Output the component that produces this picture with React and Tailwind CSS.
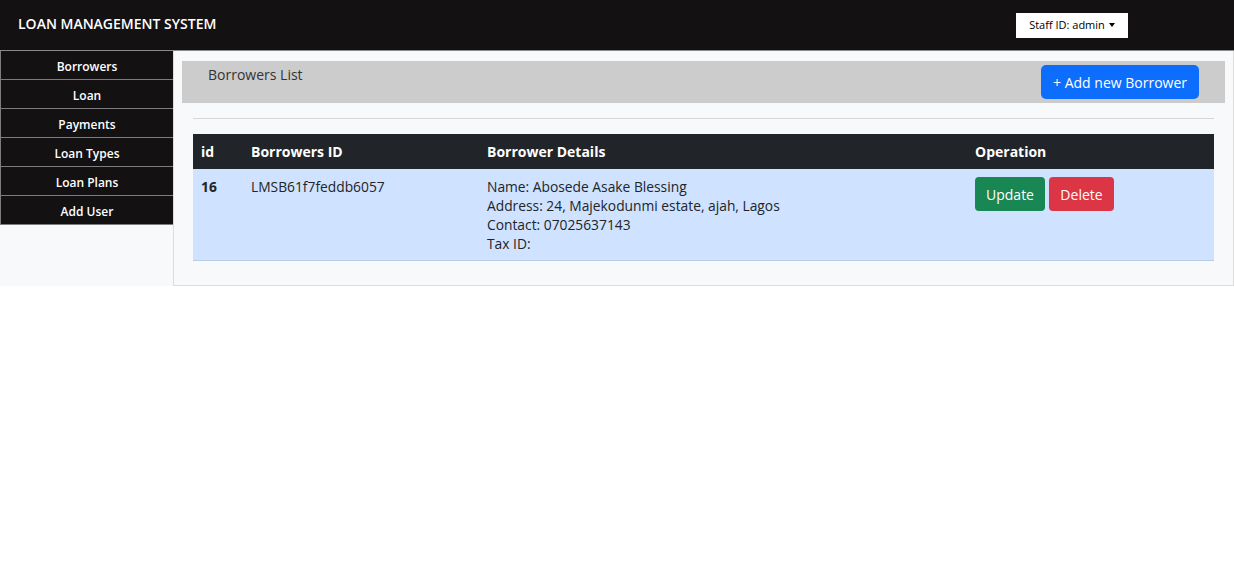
import React from "react";

const navItems = ["Borrowers", "Loan", "Payments", "Loan Types", "Loan Plans", "Add User"];

export default function App() {
  return (
    <div className="w-[1234px] h-[564px] bg-white font-['Open_Sans',sans-serif] text-[#212529]">
      <header className="h-[50px] bg-[#131112] flex items-center justify-between pl-[18px] pr-[106px]">
        <div className="text-white text-[14px] font-semibold pb-[4px]">LOAN MANAGEMENT SYSTEM</div>
        <button className="h-[25px] w-[112px] bg-white text-black text-[11px] flex items-center justify-center gap-[4px]">
          <span>Staff ID: admin</span>
          <span className="inline-block w-0 h-0 border-l-[3.5px] border-r-[3.5px] border-t-[4px] border-l-transparent border-r-transparent border-t-black"></span>
        </button>
      </header>
      <div className="flex border-t border-[#8a8a8a]">
        <aside className="w-[173px] bg-[#f8f9fa] shrink-0">
          {navItems.map((item) => (
            <div
              key={item}
              className="h-[29px] pt-[3px] bg-[#131112] border-b border-l border-[#7d7d7d] flex items-center justify-center text-white text-[12px] font-semibold"
            >
              {item}
            </div>
          ))}
        </aside>
        <main className="flex-1 bg-[#f8f9fa] border-l border-r border-b border-[#dcdcdc] pt-[10px] pb-[24px]">
          <div className="mx-[8px] h-[42px] bg-[#cccccc] flex items-start justify-between pl-[26px] pr-[26px]">
            <div className="pt-[3px] text-[14px] text-[#333]">Borrowers List</div>
            <button className="mt-[4px] h-[34px] px-[12px] bg-[#0d6efd] text-white text-[14px] rounded-[5px]">
              + Add new Borrower
            </button>
          </div>
          <div className="mx-[19px] mt-[15px] h-px bg-[#d6d7d8]"></div>
          <table className="mx-[19px] mt-[15px] w-[1021px] border-collapse table-fixed text-[13.8px]">
            <colgroup>
              <col className="w-[50px]" />
              <col className="w-[236px]" />
              <col className="w-[488px]" />
              <col className="w-[247px]" />
            </colgroup>
            <thead>
              <tr className="bg-[#212529] text-white h-[35px] text-[14px]">
                <th className="text-left font-bold px-[8px] align-middle">id</th>
                <th className="text-left font-bold px-[8px] align-middle">Borrowers ID</th>
                <th className="text-left font-bold px-[8px] align-middle">Borrower Details</th>
                <th className="text-left font-bold px-[8px] align-middle">Operation</th>
              </tr>
            </thead>
            <tbody>
              <tr className="bg-[#cfe2ff] border-b border-[#bacbe6] align-top">
                <td className="px-[8px] pt-[8px] font-bold leading-[19px]">16</td>
                <td className="px-[8px] pt-[8px] leading-[19px]">LMSB61f7feddb6057</td>
                <td className="px-[8px] pt-[8px] pb-[7px] leading-[19px]">
                  <div>Name: Abosede Asake Blessing</div>
                  <div>Address: 24, Majekodunmi estate, ajah, Lagos</div>
                  <div>Contact: 07025637143</div>
                  <div>Tax ID:</div>
                </td>
                <td className="px-[8px] pt-[8px]">
                  <div className="flex gap-[4px]">
                    <button className="h-[34px] w-[70px] bg-[#198754] text-white rounded-[4px] text-[14px]">Update</button>
                    <button className="h-[34px] w-[65px] bg-[#dc3545] text-white rounded-[4px] text-[14px]">Delete</button>
                  </div>
                </td>
              </tr>
            </tbody>
          </table>
        </main>
      </div>
    </div>
  );
}
